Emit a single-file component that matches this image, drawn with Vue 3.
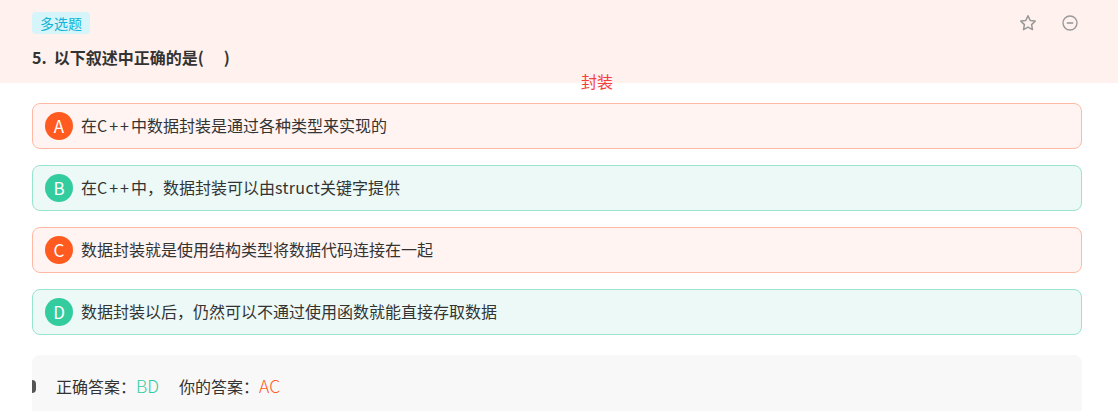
<script setup>
const options = [
  { key: 'A', text: '在C++中数据封装是通过各种类型来实现的', state: 'wrong' },
  { key: 'B', text: '在C++中，数据封装可以由struct关键字提供', state: 'right' },
  { key: 'C', text: '数据封装就是使用结构类型将数据代码连接在一起', state: 'wrong' },
  { key: 'D', text: '数据封装以后，仍然可以不通过使用函数就能直接存取数据', state: 'right' }
]

// latin runs are set wider than the CJK font's own latin glyphs
function splitText(text) {
  return text.split(/([A-Za-z+]+)/)
}
</script>

<template>
  <div class="question">
    <header class="question-head">
      <div class="head-top">
        <span class="type-tag">多选题</span>
        <div class="head-actions">
          <svg width="18" height="18" viewBox="0 0 18 18" fill="none" stroke="#999" stroke-width="1.5" stroke-linejoin="round">
            <path d="M9 1.800l2.200 4.600 5 .7-3.600 3.500.9 5L9 13.200l-4.500 2.400.9-5L1.800 7.100l5-.7z" />
          </svg>
          <svg width="18" height="18" viewBox="0 0 18 18" fill="none" stroke="#999" stroke-width="1.4">
            <circle cx="9" cy="9" r="7" />
            <path d="M5.800 9h6.400" stroke-width="1.600" />
          </svg>
        </div>
      </div>
      <h2 class="title"><span class="num">5.</span>以下叙述中正确的是(<span class="blank"></span>)</h2>
    </header>

    <div class="note">封装</div>

    <ul class="options">
      <li v-for="opt in options" :key="opt.key" class="option" :class="opt.state">
        <span class="badge">{{ opt.key }}</span>
        <span class="option-text">
          <span
            v-for="(part, i) in splitText(opt.text)"
            :key="i"
            :class="{ plus: part === 'C++', word: part === 'struct' }"
          >{{ part }}</span>
        </span>
      </li>
    </ul>

    <div class="answer">
      <span class="marker"></span>
      <span>正确答案：</span><span class="right-text">BD</span>
      <span class="mine">你的答案：</span><span class="wrong-text">AC</span>
    </div>
  </div>
</template>

<style scoped>
.question {
  height: 411px;
  overflow: hidden;
  font-family: "Noto Sans CJK SC", "Noto Sans", sans-serif;
  color: #333;
}

.question-head {
  height: 83px;
  box-sizing: border-box;
  padding: 12px 39px 0 32px;
  background: #fff1ed;
}

.head-top {
  display: flex;
  justify-content: space-between;
  align-items: flex-start;
}

.type-tag {
  height: 22px;
  padding: 0 8px;
  border-radius: 4px;
  background: #d5f5fb;
  color: #12b3d4;
  font-size: 14px;
  line-height: 22px;
}

.head-actions {
  display: flex;
  gap: 24px;
  padding-top: 2px;
}

.title {
  margin: 11px 0 0;
  font-size: 16px;
  font-weight: 700;
  line-height: 24px;
}

.num {
  margin-right: 7px;
}

.blank {
  display: inline-block;
  width: 20px;
}

.note {
  margin-top: -12px;
  padding-left: 76px;
  height: 20px;
  text-align: center;
  color: #f53f3f;
  font-size: 16px;
  line-height: 20px;
  position: relative;
}

.options {
  list-style: none;
  margin: 12px 36px 0 32px;
  padding: 0;
  display: flex;
  flex-direction: column;
  gap: 16px;
}

.option {
  height: 46px;
  box-sizing: border-box;
  padding: 0 12px;
  display: flex;
  align-items: center;
  gap: 8px;
  border: 1px solid;
  border-radius: 8px;
  font-size: 16px;
}

.option-text {
  padding-bottom: 2px;
}

.plus {
  letter-spacing: 2px;
}

.word {
  letter-spacing: 0.33px;
}

.option.wrong {
  background: #fff4f1;
  border-color: #ffb9a5;
}

.option.right {
  background: #ecf9f6;
  border-color: #98e4cd;
}

.badge {
  width: 28px;
  height: 26px;
  padding-bottom: 2px;
  border-radius: 50%;
  display: flex;
  align-items: center;
  justify-content: center;
  color: #fff;
  font-size: 17px;
}

.wrong .badge {
  background: #ff5a1f;
}

.right .badge {
  background: #33cc9f;
}

.answer {
  position: relative;
  margin: 20px 36px 0 32px;
  height: 80px;
  padding: 19px 24px 0;
  box-sizing: border-box;
  background: #f8f8f8;
  border-radius: 8px 8px 0 0;
  font-size: 16px;
  line-height: 24px;
}

.marker {
  position: absolute;
  left: 0;
  top: 25px;
  width: 4px;
  height: 13px;
  background: #555;
  border-radius: 0 4px 4px 0;
}

.right-text,
.wrong-text {
  font-size: 17.5px;
  font-weight: 300;
}

.right-text {
  color: #33cc9f;
}

.wrong-text {
  color: #ff5a1f;
}

.mine {
  margin-left: 20px;
}
</style>

<style>
html, body {
  margin: 0;
  overflow: hidden;
  background: #fff;
}
</style>
